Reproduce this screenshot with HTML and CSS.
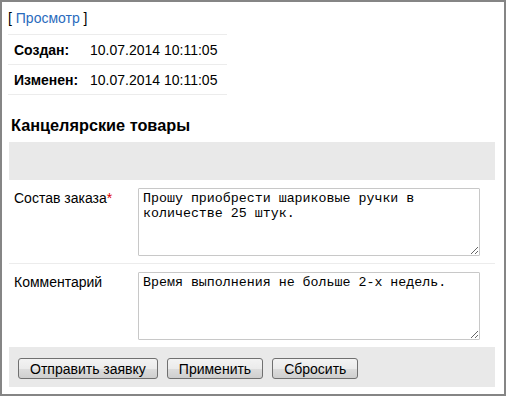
FILE: index.html
```html
<!DOCTYPE html>
<html lang="ru">
<head>
<meta charset="utf-8">
<title>Канцелярские товары</title>
<link rel="stylesheet" href="styles.css">
</head>
<body>
<div class="frame">
  <div class="toplink">[ <a href="#" class="link">Просмотр</a> ]</div>
  <div class="info">
    <div class="info-row"><span class="info-label">Создан:</span><span class="info-value">10.07.2014 10:11:05</span></div>
    <div class="info-row"><span class="info-label">Изменен:</span><span class="info-value">10.07.2014 10:11:05</span></div>
  </div>
  <h2 class="title">Канцелярские товары</h2>
  <form class="form">
    <div class="form-head"></div>
    <div class="form-row">
      <label class="form-label">Состав заказа<span class="req">*</span></label>
      <textarea class="field">Прошу приобрести шариковые ручки в количестве 25 штук.</textarea>
    </div>
    <div class="form-row last">
      <label class="form-label">Комментарий</label>
      <textarea class="field">Время выполнения не больше 2-х недель.</textarea>
    </div>
    <div class="form-buttons">
      <button type="button" class="btn">Отправить заявку</button>
      <button type="button" class="btn">Применить</button>
      <button type="button" class="btn">Сбросить</button>
    </div>
  </form>
</div>
</body>
</html>
```
FILE: styles.css
```css
html, body {
  margin: 0;
  padding: 0;
  background: #fff;
}
body {
  font-family: "Liberation Sans", Arial, sans-serif;
  font-size: 14px;
  color: #000;
}
.frame {
  box-sizing: border-box;
  width: 506px;
  height: 396px;
  border: 2px solid #858585;
  padding: 8px 8px 0 6px;
}
.toplink {
  line-height: 16px;
  height: 16px;
  margin-bottom: 8px;
}
.link {
  color: #2a6bbd;
  text-decoration: none;
}
.info {
  width: 219px;
  border-top: 1px solid #ececec;
}
.info-row {
  display: flex;
  align-items: center;
  height: 29px;
  border-bottom: 1px solid #ececec;
}
.info-label {
  width: 76px;
  padding-left: 6px;
  font-weight: bold;
}
.title {
  margin: 20px 0 7px 3px;
  font-size: 16.3px;
  line-height: 20px;
  font-weight: bold;
}
.form {
  margin: 0 0 0 1px;
  width: 486px;
}
.form-head {
  height: 38px;
  background: #e9e9e9;
}
.form-row {
  display: flex;
  align-items: flex-start;
  padding: 8px 0 7px;
  border-bottom: 1px solid #ececec;
}
.form-row.last {
  border-bottom: none;
}
.form-label {
  width: 124px;
  padding-left: 5px;
  margin-top: 2px;
  line-height: 16px;
}
.req {
  color: #e00000;
}
.field {
  box-sizing: border-box;
  width: 342px;
  height: 68px;
  margin: 0;
  padding: 2px 4px;
  border: 1px solid #c8c8c8;
  border-radius: 1px;
  font-family: "Liberation Mono", "Courier New", monospace;
  font-size: 13.3px;
  line-height: 15px;
  color: #000;
  resize: both;
}
.form-buttons {
  display: flex;
  gap: 9px;
  height: 40px;
  box-sizing: border-box;
  padding: 11px 9px 0;
  background: #e9e9e9;
}
.btn {
  height: 21px;
  padding: 0 11px;
  border: 1px solid #707070;
  border-radius: 3px;
  background: linear-gradient(#f3f3f3 0%, #ebebeb 50%, #dddddd 51%, #cfcfcf 100%);
  font-family: "Liberation Sans", Arial, sans-serif;
  font-size: 14px;
  color: #000;
}
```
